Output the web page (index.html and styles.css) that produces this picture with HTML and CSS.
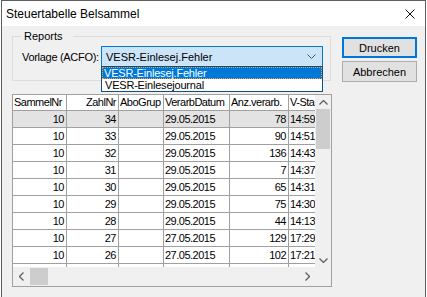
FILE: index.html
```html
<!DOCTYPE html>
<html lang="de">
<head>
    <meta charset="UTF-8">
    <title>Steuertabelle Belsammel</title>
    <link rel="stylesheet" href="styles.css">
</head>
<body>
    <div class="window">
        <div class="titlebar">
            <span class="title">Steuertabelle Belsammel</span>
            <svg class="close" width="10" height="10" viewBox="0 0 10 10">
                <path d="M0.5 0.5L9.5 9.5M9.5 0.5L0.5 9.5" stroke="#111" stroke-width="1" fill="none"/>
            </svg>
        </div>

        <div class="client">
            <div class="top-row">
                <fieldset class="group">
                    <legend>Reports</legend>
                    <div class="field">
                        <label class="field-label">Vorlage (ACFO):</label>
                        <div class="combo-wrap">
                            <div class="combo">
                                <span>VESR-Einlesej.Fehler</span>
                                <svg width="9" height="5" viewBox="0 0 9 5">
                                    <polyline points="0.5,0.5 4.5,4.5 8.5,0.5" stroke="#555" fill="none"/>
                                </svg>
                            </div>
                            <ul class="dropdown">
                                <li class="selected">VESR-Einlesej.Fehler</li>
                                <li>VESR-Einlesejournal</li>
                            </ul>
                        </div>
                    </div>
                </fieldset>

                <div class="buttons">
                    <button class="btn default">Drucken</button>
                    <button class="btn">Abbrechen</button>
                </div>
            </div>

            <!-- Data grid -->
            <div class="grid">
                <div class="grid-view">
                    <div class="row header">
                        <div class="cell c1">SammelNr</div>
                        <div class="cell c2 num">ZahlNr</div>
                        <div class="cell c3">AboGrup</div>
                        <div class="cell c4">VerarbDatum</div>
                        <div class="cell c5">Anz.verarb.</div>
                        <div class="cell c6">V-Sta</div>
                    </div>
                    <div id="rows"></div>
                </div>
                <div class="vscroll">
                    <div class="arrow v">
                        <svg width="9" height="5" viewBox="0 0 9 5"><polyline points="0.5,4.5 4.5,0.5 8.5,4.5" stroke="#606060" stroke-width="1.3" fill="none"/></svg>
                    </div>
                    <div class="track v">
                        <div class="thumb v"></div>
                    </div>
                    <div class="arrow v">
                        <svg width="9" height="5" viewBox="0 0 9 5"><polyline points="0.5,0.5 4.5,4.5 8.5,0.5" stroke="#606060" stroke-width="1.3" fill="none"/></svg>
                    </div>
                </div>
                <div class="hscroll">
                    <div class="arrow h">
                        <svg width="5" height="9" viewBox="0 0 5 9"><polyline points="4.5,0.5 0.5,4.5 4.5,8.5" stroke="#606060" stroke-width="1.3" fill="none"/></svg>
                    </div>
                    <div class="track h">
                        <div class="thumb h"></div>
                    </div>
                    <div class="arrow h">
                        <svg width="5" height="9" viewBox="0 0 5 9"><polyline points="0.5,0.5 4.5,4.5 0.5,8.5" stroke="#606060" stroke-width="1.3" fill="none"/></svg>
                    </div>
                </div>
                <div class="corner"></div>
            </div>
        </div>
    </div>

    <script>
        // Zeilen der Steuertabelle
        const data = [
            [10, 34, "", "29.05.2015", 78, "14:59"],
            [10, 33, "", "29.05.2015", 90, "14:51"],
            [10, 32, "", "29.05.2015", 136, "14:43"],
            [10, 31, "", "29.05.2015", 7, "14:37"],
            [10, 30, "", "29.05.2015", 65, "14:31"],
            [10, 29, "", "29.05.2015", 75, "14:30"],
            [10, 28, "", "29.05.2015", 44, "14:13"],
            [10, 27, "", "27.05.2015", 129, "17:29"],
            [10, 26, "", "27.05.2015", 102, "17:21"],
            ["", "", "", "", "", ""]
        ];

        const rows = document.getElementById("rows");
        data.forEach((d, i) => {
            const row = document.createElement("div");
            row.className = "row" + (i === 0 ? " current" : "");
            row.innerHTML =
                '<div class="cell c1 num">' + d[0] + '</div>' +
                '<div class="cell c2 num">' + d[1] + '</div>' +
                '<div class="cell c3">' + d[2] + '</div>' +
                '<div class="cell c4">' + d[3] + '</div>' +
                '<div class="cell c5 num">' + d[4] + '</div>' +
                '<div class="cell c6">' + d[5] + '</div>';
            rows.appendChild(row);
        });
    </script>
</body>
</html>
```

FILE: styles.css
```css
/* Page */
body {
    margin: 0;
    background: #fff;
    font-family: "Liberation Sans", Arial, sans-serif;
    color: #000;
}

/* Dialog window */
.window {
    margin-left: 1px;
    width: 425px;
    height: 297px;
    box-sizing: border-box;
    border: 1px solid #5f5f5f;
    border-bottom: none;
    background: #f0f0f0;
    overflow: hidden;
}

.titlebar {
    height: 25px;
    background: #fff;
    display: flex;
    align-items: center;
    justify-content: space-between;
    padding: 0 10px 0 4px;
}

.title {
    font-size: 12px;
}

.client {
    padding: 4px 0 0 10px;
}

/* Group box + buttons */
.top-row {
    display: flex;
    align-items: flex-start;
}

.group {
    margin: 0;
    width: 319px;
    height: 51px;
    box-sizing: border-box;
    padding: 3px 7px 0 9px;
    border: 1px solid #dcdcdc;
}

.group legend {
    margin-left: -1px;
    padding: 0 10px 0 3px;
    font-size: 11px;
    line-height: 13px;
}

.field {
    display: flex;
    align-items: center;
}

.field-label {
    width: 79px;
    font-size: 11px;
    letter-spacing: -0.3px;
}

.combo-wrap {
    position: relative;
}

.combo {
    width: 222px;
    height: 21px;
    box-sizing: border-box;
    border: 1px solid #0078d7;
    background: #cce4f7;
    display: flex;
    align-items: center;
    justify-content: space-between;
    padding: 0 6px 0 4px;
    font-size: 11px;
}

.dropdown {
    position: absolute;
    left: 0;
    top: 20px;
    width: 222px;
    box-sizing: border-box;
    margin: 0;
    padding: 0;
    list-style: none;
    border: 1px solid #0c4f8a;
    background: #fff;
    font-size: 11px;
    letter-spacing: -0.2px;
    z-index: 2;
}

.dropdown li {
    height: 12px;
    line-height: 12px;
    padding-left: 3px;
}

.dropdown li.selected {
    background: #0078d7;
    color: #fff;
    outline: 1px dotted #f0a030;
    outline-offset: -1px;
    padding-left: 2px;
}

.buttons {
    margin: 7px 0 0 11px;
    display: flex;
    flex-direction: column;
    gap: 3px;
}

.btn {
    width: 75px;
    height: 21px;
    box-sizing: border-box;
    padding: 0;
    border: 1px solid #adadad;
    background: #e1e1e1;
    font-family: "Liberation Sans", Arial, sans-serif;
    font-size: 11px;
    color: #000;
}

.btn.default {
    border: 2px solid #0078d7;
}

/* Data grid */
.grid {
    margin-top: 12px;
    width: 320px;
    height: 193px;
    box-sizing: border-box;
    border: 1px solid #a0a0a0;
    display: grid;
    grid-template-columns: 302px 16px;
    grid-template-rows: 172px 19px;
    background: #fff;
}

.grid-view {
    overflow: hidden;
    background: #fff;
}

.row {
    display: flex;
    height: 17px;
    font-size: 11px;
    letter-spacing: -0.5px;
    white-space: nowrap;
}

.row.header {
    height: 16px;
}

.row.current {
    background: #e3e3e3;
}

.cell {
    flex: none;
    box-sizing: border-box;
    border-right: 1px solid #a0a0a0;
    border-bottom: 1px solid #a0a0a0;
    padding: 0 1px;
    line-height: 16px;
    overflow: hidden;
}

.header .cell {
    line-height: 15px;
}

.num {
    text-align: right;
    padding-right: 2px;
}

.c1 { width: 54px; }
.c2 { width: 52px; }
.c3 { width: 45px; }
.c4 { width: 66px; }
.c5 { width: 59px; }
.c6 { width: 27px; }

/* Scrollbars */
.vscroll,
.hscroll,
.corner {
    background: #f0f0f0;
}

.vscroll {
    display: flex;
    flex-direction: column;
}

.hscroll {
    display: flex;
}

.arrow {
    display: flex;
    align-items: center;
    justify-content: center;
}

.arrow.v {
    height: 14px;
}

.arrow.h {
    width: 16px;
}

.track {
    flex: 1;
}

.thumb {
    background: #cdcdcd;
}

.thumb.v {
    margin: 0 1px;
    height: 40px;
}

.thumb.h {
    margin: 1px 0 0 1px;
    width: 18px;
    height: 17px;
}
```
